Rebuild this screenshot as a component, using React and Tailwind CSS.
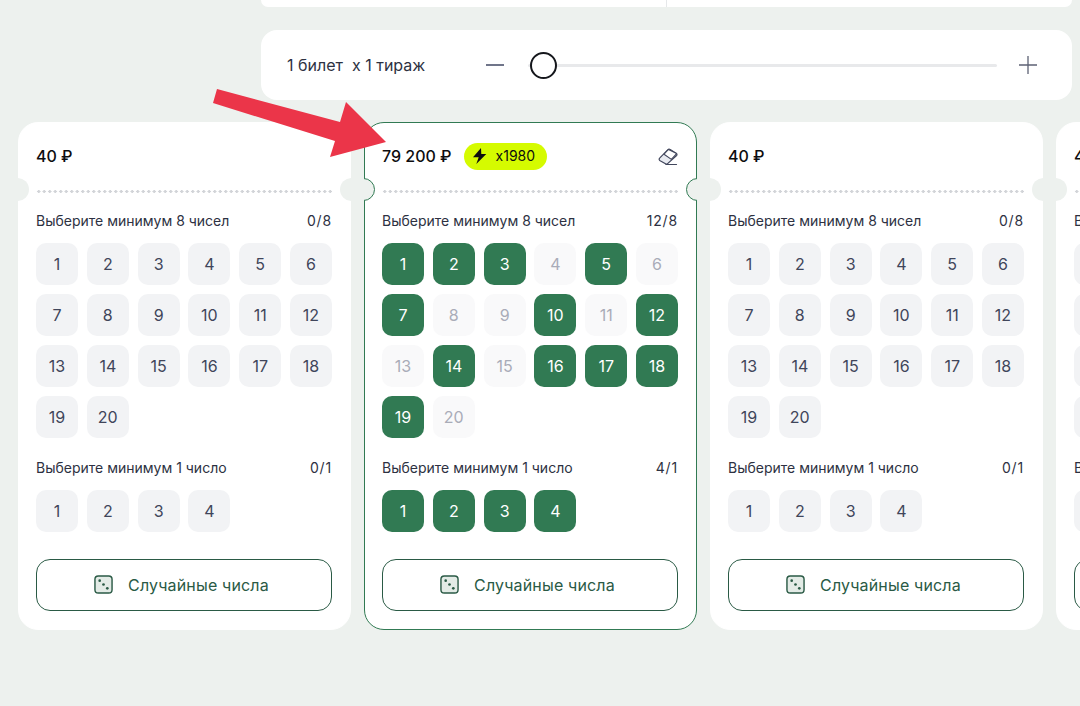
const NUMS = Array.from({ length: 20 }, (_, i) => i + 1);
const BONUS = [1, 2, 3, 4];
const PICKED = [1, 2, 3, 5, 7, 10, 12, 14, 16, 17, 18, 19];

function Dice() {
  return (
    <svg width="19" height="19" viewBox="0 0 20 20" fill="none">
      <rect x="1" y="1" width="18" height="18" rx="3.5" fill="#e3ebe6" stroke="#2a5a45" strokeWidth="1.5" />
      <circle cx="6" cy="6" r="1.4" fill="#2a5a45" />
      <circle cx="10" cy="10" r="1.4" fill="#2a5a45" />
      <circle cx="14" cy="14" r="1.4" fill="#2a5a45" />
    </svg>
  );
}

function Eraser() {
  return (
    <svg width="20" height="18" viewBox="0 0 20 18" fill="none">
      <path d="M1.6 10.2 10 1.6a1.6 1.6 0 0 1 2.2 0l6.2 3.8a1.4 1.4 0 0 1 .2 2.1L9.6 15.6a1.6 1.6 0 0 1-2.1.1L1.7 12.4a1.4 1.4 0 0 1-.1-2.2Z" fill="#e9ebf1" stroke="#41465c" strokeWidth="1.2" strokeLinejoin="round" />
      <path d="M10.5 1.4 18.6 5.6 13.4 11.4 6 6.2Z" fill="#fff" stroke="#41465c" strokeWidth="1.1" strokeLinejoin="round" />
      <path d="M8 16.5H18.5" stroke="#41465c" strokeWidth="1.2" strokeLinecap="round" />
    </svg>
  );
}

function Cell({ n, state }) {
  const cls = {
    idle: "bg-[#f2f3f5] text-[#40455a]",
    on: "bg-[#317a53] text-white",
    off: "bg-[#f9f9fa] text-[#a9acb8]",
  }[state];
  return (
    <div className={`w-[42px] h-[42px] rounded-[10px] flex items-center justify-center text-[16px] ${cls}`}>{n}</div>
  );
}

function Section({ title, count, nums, cellState }) {
  return (
    <div>
      <div className="flex justify-between text-[14px] leading-[20px] text-[#2d3142]">
        <span>{title}</span>
        <span className="tracking-[0.06em]">{count}</span>
      </div>
      <div className="mt-[12.4px] grid grid-cols-[repeat(6,42px)] justify-between gap-y-[8.8px]">
        {nums.map((n) => (
          <Cell key={n} n={n} state={cellState(n)} />
        ))}
      </div>
    </div>
  );
}

function Notches({ active }) {
  const ring = active ? "border border-[#317a53]" : "";
  return (
    <div className="absolute inset-[-1px] overflow-hidden rounded-[20px] pointer-events-none">
      <div className={`absolute left-[-12px] top-[56px] w-[23px] h-[23px] rounded-full bg-[#edf1ee] ${ring}`} />
      <div className={`absolute right-[-12px] top-[56px] w-[23px] h-[23px] rounded-full bg-[#edf1ee] ${ring}`} />
    </div>
  );
}

function Ticket({ active }) {
  return (
    <div className={`relative shrink-0 w-[333px] h-[508px] rounded-[20px] bg-white border pl-[17px] pr-[18px] ${active ? "border-[#317a53]" : "border-white"}`}>
      <Notches active={active} />
      <div className="flex items-center h-[67px] text-[#0d0d0f]">
        <span className="text-[16px] font-medium mb-[2px]">{active ? "79 200 ₽" : "40 ₽"}</span>
        {active && (
          <span className="ml-[12px] h-[27px] pl-[9px] pr-[12px] pb-[2px] rounded-full bg-[#d5fb00] flex items-center gap-[9px] text-[14px]">
            <svg width="14" height="16" viewBox="0 0 14 16" fill="#0d0d0f">
              <path d="M8 0 0 9.3H5.7L3.3 16 13.3 6H8.3L8 0Z" />
            </svg>
            x1980
          </span>
        )}
        {active && (
          <span className="ml-auto flex">
            <Eraser />
          </span>
        )}
      </div>
      <div className="h-[3px] bg-[radial-gradient(circle,#d2d4d8_1.4px,transparent_1.7px)] bg-[length:5.5px_3px]" />
      <div className="mt-[18px]">
        <Section
          title="Выберите минимум 8 чисел"
          count={active ? "12/8" : "0/8"}
          nums={NUMS}
          cellState={(n) => (active ? (PICKED.includes(n) ? "on" : "off") : "idle")}
        />
      </div>
      <div className="mt-[20.2px]">
        <Section
          title="Выберите минимум 1 число"
          count={active ? "4/1" : "0/1"}
          nums={BONUS}
          cellState={() => (active ? "on" : "idle")}
        />
      </div>
      <button className="mt-[26.6px] w-full h-[52px] rounded-[14px] border border-[#2a5a45] flex items-center justify-center gap-[15px] pr-[5px] text-[16px] tracking-[0.01em] text-[#2a5a45]">
        <Dice />
        Случайные числа
      </button>
    </div>
  );
}

export default function App() {
  return (
    <div className="h-[706px] w-[1080px] overflow-hidden bg-[#edf1ee] font-['Inter','Liberation_Sans',sans-serif] relative">
      <div className="ml-[261px] mr-[8px]">
        <div className="h-[7px] flex bg-white rounded-b-[12px]">
          <div className="w-[406px] border-r border-[#e6e8ea]" />
        </div>
        <div className="mt-[23px] h-[70px] rounded-[16px] bg-white flex items-center pl-[26px] pr-[35px]">
          <span className="w-[199px] shrink-0 text-[16px] text-[#2d3142]">1 билет&nbsp; x 1 тираж</span>
          <span className="w-[18px] h-[1.5px] bg-[#70758a]" />
          <div className="relative flex-1 ml-[24px] mr-[22px] h-[3px] bg-[#e8e9eb] rounded-full">
            <div className="absolute left-[2px] top-[-12px] w-[27px] h-[27px] rounded-full bg-white border-2 border-[#15171c]" />
          </div>
          <svg width="18" height="18" viewBox="0 0 18 18" stroke="#5d6274" strokeWidth="1.3">
            <path d="M9 0V18M0 9H18" />
          </svg>
        </div>
      </div>
      <div className="mt-[22px] ml-[18px] flex gap-[13px]">
        <Ticket />
        <Ticket active />
        <Ticket />
        <Ticket />
      </div>
      {/* red arrow over the page */}
      <svg className="absolute left-[205px] top-[80px]" width="185" height="85" viewBox="0 0 185 85">
        <path d="M12 9 135 42 141 22 181 62 125 77 130 61 8 23Z" fill="#eb3549" />
      </svg>
    </div>
  );
}
